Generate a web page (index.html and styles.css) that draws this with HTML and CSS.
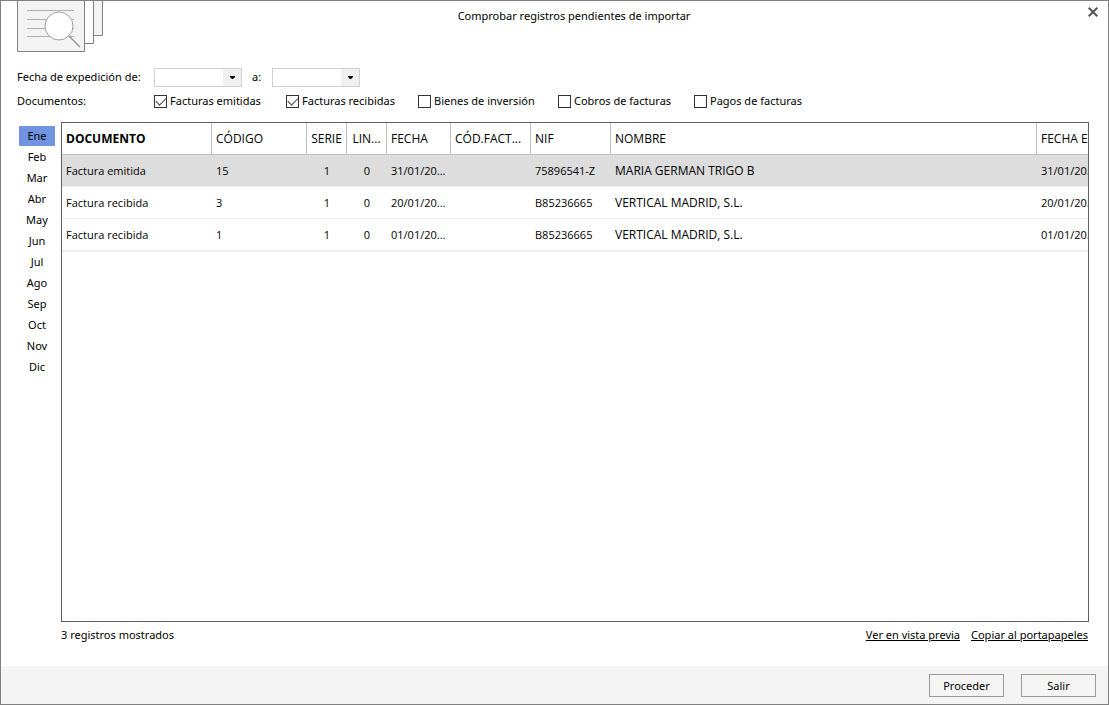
FILE: index.html
```html
<!DOCTYPE html>
<html lang="es">
<head>
<meta charset="utf-8">
<title>Comprobar registros pendientes de importar</title>
<link rel="stylesheet" href="styles.css">
</head>
<body>
<main class="window">
  <header class="titlebar">
    <svg class="logo" width="87" height="52" viewBox="0 0 87 52" fill="none" stroke="#808080" aria-hidden="true">
      <path d="M67 -1H85.500V34.500H77" fill="#f3f3f3"/>
      <path d="M67 -1H76.500V42.500H67" fill="#fff"/>
      <path d="M.5 -1H67.500V50.500H.5z" fill="#f3f3f3"/>
      <path d="M10 9.500H57M10 18.500H57M10 27.500H57M10 35.500H57" stroke="#b0b0b0"/>
      <circle cx="42" cy="25" r="14" fill="#fff" stroke="#a0a0a0"/>
      <path d="M52 35L63 46" stroke="#909090" stroke-width="1.300"/>
    </svg>
    <h1 class="title">Comprobar registros pendientes de importar</h1>
    <button class="close" type="button" aria-label="Cerrar">
      <svg width="10" height="10" viewBox="0 0 10 10" fill="none" stroke="#555" stroke-width="2"><path d="M.7 .7L9.300 9.300M9.300 .7L.7 9.300"/></svg>
    </button>
  </header>

  <form class="filters">
    <div class="filter-row dates">
      <label class="caption" for="desde">Fecha de expedición de:</label>
      <div class="picker"><input id="desde" type="text"><button type="button" aria-label="Elegir fecha inicial"><svg width="5" height="3" viewBox="0 0 5 3"><path d="M0 0H5V1L3 3H2L0 1z"/></svg></button></div>
      <label class="until" for="hasta">a:</label>
      <div class="picker"><input id="hasta" type="text"><button type="button" aria-label="Elegir fecha final"><svg width="5" height="3" viewBox="0 0 5 3"><path d="M0 0H5V1L3 3H2L0 1z"/></svg></button></div>
    </div>
    <div class="filter-row documents">
      <span class="caption">Documentos:</span>
      <label class="option"><input type="checkbox" checked>Facturas emitidas</label>
      <label class="option"><input type="checkbox" checked>Facturas recibidas</label>
      <label class="option wide"><input type="checkbox">Bienes de inversión</label>
      <label class="option"><input type="checkbox">Cobros de facturas</label>
      <label class="option"><input type="checkbox">Pagos de facturas</label>
    </div>
  </form>

  <div class="content">
    <nav class="months" aria-label="Meses">
      <button class="month selected" type="button">Ene</button>
      <button class="month" type="button">Feb</button>
      <button class="month" type="button">Mar</button>
      <button class="month" type="button">Abr</button>
      <button class="month" type="button">May</button>
      <button class="month" type="button">Jun</button>
      <button class="month" type="button">Jul</button>
      <button class="month" type="button">Ago</button>
      <button class="month" type="button">Sep</button>
      <button class="month" type="button">Oct</button>
      <button class="month" type="button">Nov</button>
      <button class="month" type="button">Dic</button>
    </nav>
    <div class="grid-frame">
      <table class="records">
        <colgroup>
          <col class="c-doc"><col class="c-code"><col class="c-small"><col class="c-small"><col class="c-date"><col class="c-mid"><col class="c-mid"><col><col class="c-date">
        </colgroup>
        <thead>
          <tr><th class="sorted">DOCUMENTO</th><th>CÓDIGO</th><th class="center">SERIE</th><th class="center">LIN...</th><th>FECHA</th><th>CÓD.FACT...</th><th>NIF</th><th>NOMBRE</th><th>FECHA EX...</th></tr>
        </thead>
        <tbody>
          <tr class="selected"><td>Factura emitida</td><td>15</td><td class="center">1</td><td class="center">0</td><td>31/01/20...</td><td></td><td>75896541-Z</td><td class="name">MARIA GERMAN TRIGO B</td><td>31/01/20...</td></tr>
          <tr><td>Factura recibida</td><td>3</td><td class="center">1</td><td class="center">0</td><td>20/01/20...</td><td></td><td>B85236665</td><td class="name">VERTICAL MADRID, S.L.</td><td>20/01/20...</td></tr>
          <tr><td>Factura recibida</td><td>1</td><td class="center">1</td><td class="center">0</td><td>01/01/20...</td><td></td><td>B85236665</td><td class="name">VERTICAL MADRID, S.L.</td><td>01/01/20...</td></tr>
        </tbody>
      </table>
    </div>
  </div>

  <div class="summary">
    <span class="count">3 registros mostrados</span>
    <a href="#preview">Ver en vista previa</a>
    <a href="#copy">Copiar al portapapeles</a>
  </div>

  <footer class="actions">
    <button type="button">Proceder</button>
    <button type="button">Salir</button>
  </footer>
</main>
</body>
</html>
```
FILE: styles.css
```css
* {
  box-sizing: border-box;
}

body {
  margin: 0;
  background: #fff;
  color: #000;
  font: 11px/16px "Noto Sans", "Open Sans", sans-serif;
}

button,
input {
  margin: 0;
  padding: 0;
  color: inherit;
  font: inherit;
}

.window {
  display: flex;
  flex-direction: column;
  min-height: 100vh;
  border: 1px solid #808080;
}

.titlebar {
  display: grid;
  grid-template-columns: 1fr auto 1fr;
  align-items: start;
  padding: 0 10px 0 16px;
}

.logo {
  display: block;
}

.title {
  margin: 0;
  padding: 7px 0 0 33px;
  font-size: 11px;
  font-weight: 400;
}

.close {
  display: flex;
  justify-self: end;
  margin-top: 6px;
  border: 0;
  background: none;
}

.filters {
  padding: 12px 16px 0;
}

.filter-row {
  display: flex;
  align-items: center;
  height: 24px;
}

.caption {
  width: 137px;
}

.picker {
  display: flex;
  width: 88px;
  height: 19px;
  border: 1px solid #d0d0d0;
}

.picker input {
  flex: 1;
  min-width: 0;
  border: 0;
  outline: 0;
}

.picker button {
  display: flex;
  align-items: center;
  justify-content: center;
  width: 18px;
  border: 0;
  background: #f0f0f0;
}

.until {
  width: 30px;
  padding-left: 10px;
}

.option {
  display: flex;
  align-items: center;
  gap: 3px;
  width: 132px;
}

.option.wide,
.option.wide ~ .option {
  width: 140px;
}

.option.wide + .option {
  width: 136px;
}

.option input {
  display: grid;
  flex: none;
  place-items: center;
  width: 13px;
  height: 13px;
  border: 1px solid #333;
  background: #fff;
  appearance: none;
}

.option input:checked::after {
  width: 9px;
  height: 5px;
  margin-bottom: 3px;
  border: solid #444;
  border-width: 0 0 1px 1px;
  transform: rotate(-45deg);
  content: "";
}

.content {
  display: flex;
  flex: 1;
  gap: 6px;
  padding: 9px 19px 0 18px;
}

.months {
  display: flex;
  flex-direction: column;
  gap: 1px;
  width: 36px;
  padding-top: 4px;
}

.month {
  height: 20px;
  border: 0;
  background: none;
}

.month.selected {
  background: #7094e0;
}

.grid-frame {
  flex: 1;
  min-width: 0;
  overflow: hidden;
  border: 1px solid #606060;
}

.records {
  width: calc(100% + 13px);
  border-collapse: separate;
  border-spacing: 0;
  table-layout: fixed;
  font-family: "Open Sans", "Noto Sans", sans-serif;
}

.c-doc { width: 150px; }
.c-code { width: 95px; }
.c-small { width: 40px; }
.c-date { width: 64px; }
.c-mid { width: 80px; }

.records th,
.records td {
  height: 32px;
  padding: 0 4px;
  border-bottom: 1px solid #eee;
  overflow: hidden;
  font-weight: 400;
  text-align: left;
  white-space: nowrap;
}

.records th {
  border-right: 1px solid #c0c0c0;
  border-bottom-color: #c0c0c0;
}

.records th,
.records .name {
  font-size: 12px;
}

.records .sorted {
  font-weight: 700;
}

.records .center {
  padding: 0;
  text-align: center;
}

.records .selected td {
  background: #ddd;
}

.records tbody tr:last-child td {
  height: 33px;
  border-bottom-width: 2px;
}

.summary {
  display: flex;
  gap: 11px;
  padding: 5px 20px 23px 60px;
}

.count {
  margin-right: auto;
}

.summary a {
  color: inherit;
}

.actions {
  display: flex;
  justify-content: flex-end;
  gap: 17px;
  padding: 8px 12px 7px;
  background: #f4f4f4;
}

.actions button {
  width: 75px;
  height: 23px;
  border: 1px solid #999;
  background: #f5f5f5;
}
```
